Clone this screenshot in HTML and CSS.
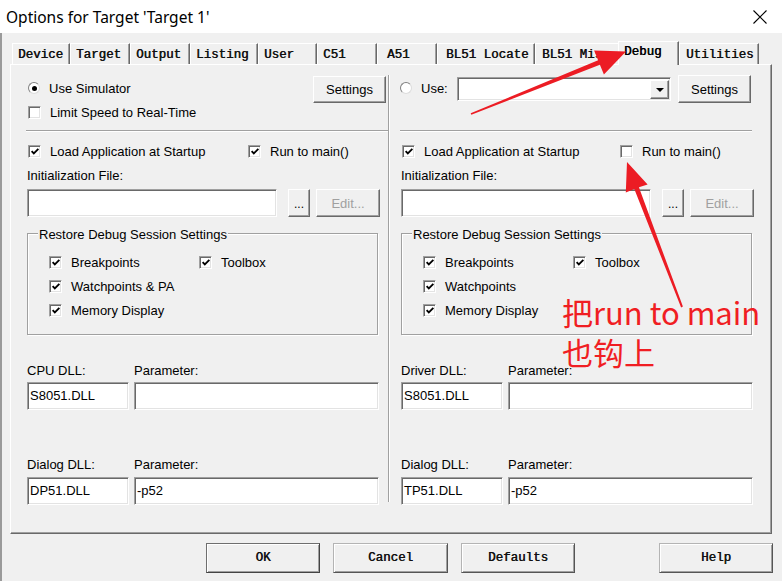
FILE: index.html
```html
<!DOCTYPE html>
<html>
<head>
<meta charset="utf-8">
<title>Options for Target 'Target 1'</title>
<link rel="stylesheet" href="styles.css">
</head>
<body>
<div class="window">
  <div class="titlebar">
    <span class="title">Options for Target 'Target 1'</span>
    <svg class="close" width="14" height="14" viewBox="0 0 14 14"><path d="M0.5 0.5 L13.5 13.5 M13.5 0.5 L0.5 13.5" stroke="#000" stroke-width="1.1" fill="none"/></svg>
  </div>
  <div class="client">
    <div class="tabs">
      <div class="tab t-device">Device</div>
      <div class="tab t-target">Target</div>
      <div class="tab t-output">Output</div>
      <div class="tab t-listing">Listing</div>
      <div class="tab t-user">User</div>
      <div class="tab t-c51">C51</div>
      <div class="tab t-a51">A51</div>
      <div class="tab t-locate">BL51 Locate</div>
      <div class="tab t-misc">BL51 Misc</div>
      <div class="tab tab-sel t-debug">Debug</div>
      <div class="tab t-util">Utilities</div>
    </div>
    <div class="panel">
      <div class="col col-left">
        <div class="top">
          <div class="stack">
            <div class="opt"><span class="rb"><span class="dot"></span></span><span>Use Simulator</span></div>
            <div class="opt"><span class="cb"></span><span>Limit Speed to Real-Time</span></div>
          </div>
          <div class="btn btn-settings">Settings</div>
        </div>
        <div class="hr"></div>
        <div class="opt-row">
          <div class="opt opt-first"><span class="cb"><svg width="11" height="11" viewBox="0 0 11 11"><path d="M1.8 5 L4.2 7.6 L9.2 2.6" fill="none" stroke="#000" stroke-width="2"/></svg></span><span>Load Application at Startup</span></div>
          <div class="opt"><span class="cb"><svg width="11" height="11" viewBox="0 0 11 11"><path d="M1.8 5 L4.2 7.6 L9.2 2.6" fill="none" stroke="#000" stroke-width="2"/></svg></span><span>Run to main()</span></div>
        </div>
        <div class="lbl">Initialization File:</div>
        <div class="init-row">
          <div class="field f-init"></div>
          <div class="btn btn-dots">...</div>
          <div class="btn btn-edit">Edit...</div>
        </div>
        <div class="group">
          <div class="legend">Restore Debug Session Settings</div>
          <div class="checks">
            <div class="opt"><span class="cb"><svg width="11" height="11" viewBox="0 0 11 11"><path d="M1.8 5 L4.2 7.6 L9.2 2.6" fill="none" stroke="#000" stroke-width="2"/></svg></span><span>Breakpoints</span></div>
            <div class="opt"><span class="cb"><svg width="11" height="11" viewBox="0 0 11 11"><path d="M1.8 5 L4.2 7.6 L9.2 2.6" fill="none" stroke="#000" stroke-width="2"/></svg></span><span>Toolbox</span></div>
            <div class="opt"><span class="cb"><svg width="11" height="11" viewBox="0 0 11 11"><path d="M1.8 5 L4.2 7.6 L9.2 2.6" fill="none" stroke="#000" stroke-width="2"/></svg></span><span>Watchpoints &amp; PA</span></div>
            <div class="opt"></div>
            <div class="opt"><span class="cb"><svg width="11" height="11" viewBox="0 0 11 11"><path d="M1.8 5 L4.2 7.6 L9.2 2.6" fill="none" stroke="#000" stroke-width="2"/></svg></span><span>Memory Display</span></div>
          </div>
        </div>
        <div class="dll-lbl dll-first"><span class="w-dll">CPU DLL:</span><span>Parameter:</span></div>
        <div class="dll-row"><div class="field f-dll">S8051.DLL</div><div class="field f-param"></div></div>
        <div class="dll-lbl dll-second"><span class="w-dll">Dialog DLL:</span><span>Parameter:</span></div>
        <div class="dll-row"><div class="field f-dll">DP51.DLL</div><div class="field f-param">-p52</div></div>
      </div>
      <div class="vdiv"></div>
      <div class="col col-right">
        <div class="top top-right">
          <div class="opt opt-use"><span class="rb"></span><span>Use:</span></div>
          <div class="combo"><span class="drop"><svg width="8" height="4" viewBox="0 0 8 4"><path d="M0 0 H8 L4 4 Z" fill="#000"/></svg></span></div>
          <div class="btn btn-settings2">Settings</div>
        </div>
        <div class="hr"></div>
        <div class="opt-row">
          <div class="opt opt-first2"><span class="cb"><svg width="11" height="11" viewBox="0 0 11 11"><path d="M1.8 5 L4.2 7.6 L9.2 2.6" fill="none" stroke="#000" stroke-width="2"/></svg></span><span>Load Application at Startup</span></div>
          <div class="opt"><span class="cb"></span><span>Run to main()</span></div>
        </div>
        <div class="lbl">Initialization File:</div>
        <div class="init-row">
          <div class="field f-init"></div>
          <div class="btn btn-dots">...</div>
          <div class="btn btn-edit">Edit...</div>
        </div>
        <div class="group">
          <div class="legend">Restore Debug Session Settings</div>
          <div class="checks">
            <div class="opt"><span class="cb"><svg width="11" height="11" viewBox="0 0 11 11"><path d="M1.8 5 L4.2 7.6 L9.2 2.6" fill="none" stroke="#000" stroke-width="2"/></svg></span><span>Breakpoints</span></div>
            <div class="opt"><span class="cb"><svg width="11" height="11" viewBox="0 0 11 11"><path d="M1.8 5 L4.2 7.6 L9.2 2.6" fill="none" stroke="#000" stroke-width="2"/></svg></span><span>Toolbox</span></div>
            <div class="opt"><span class="cb"><svg width="11" height="11" viewBox="0 0 11 11"><path d="M1.8 5 L4.2 7.6 L9.2 2.6" fill="none" stroke="#000" stroke-width="2"/></svg></span><span>Watchpoints</span></div>
            <div class="opt"></div>
            <div class="opt"><span class="cb"><svg width="11" height="11" viewBox="0 0 11 11"><path d="M1.8 5 L4.2 7.6 L9.2 2.6" fill="none" stroke="#000" stroke-width="2"/></svg></span><span>Memory Display</span></div>
          </div>
        </div>
        <div class="dll-lbl dll-first"><span class="w-dll">Driver DLL:</span><span>Parameter:</span></div>
        <div class="dll-row"><div class="field f-dll">S8051.DLL</div><div class="field f-param"></div></div>
        <div class="dll-lbl dll-second"><span class="w-dll">Dialog DLL:</span><span>Parameter:</span></div>
        <div class="dll-row"><div class="field f-dll">TP51.DLL</div><div class="field f-param">-p52</div></div>
      </div>
    </div>
    <div class="buttons">
      <div class="btn dbtn btn-ok">OK</div>
      <div class="btn dbtn btn-cancel">Cancel</div>
      <div class="btn dbtn">Defaults</div>
      <div class="btn dbtn btn-help">Help</div>
    </div>
  </div>
  <svg class="arrows" width="782" height="581" viewBox="0 0 782 581">
    <polygon fill="#ec1c24" points="470.7,113.3 598.1,60.2 594.1,50.4 626,51.5 603.9,74.6 599.9,64.8 471.3,114.7"/>
    <polygon fill="#ec1c24" points="681.1,307.4 634.3,189.1 625.8,192.5 627,162 647.6,184.6 638.9,187.3 682.9,306.6"/>
  </svg>
  <div class="note"><div class="note-line">把run to main</div><div class="note-line">也钩上</div></div>
</div>
</body>
</html>
```
FILE: styles.css
```css
* { box-sizing: border-box; }
html, body { margin: 0; padding: 0; }
body {
  width: 782px; height: 581px; overflow: hidden;
  background: #f0f0f0;
  font-family: "Liberation Sans", Arial, sans-serif;
  font-size: 13px; color: #000;
}
.window { position: relative; width: 782px; height: 581px; background: #f0f0f0; }

.titlebar {
  height: 33px; background: #fff;
  display: flex; align-items: center; justify-content: space-between;
  padding: 0 15px 0 6px;
}
.title { font-family: "Noto Sans", sans-serif; font-size: 15.5px; color: #000; }
.close { display: block; }

.client { height: 548px; padding-top: 10px; box-shadow: inset 2px 0 0 #9a9a9a; }

/* tabs */
.tabs { display: flex; align-items: flex-start; height: 21px; margin-left: 12px; position: relative; z-index: 2; }
.tab {
  height: 21px; flex: none;
  border-top: 1px solid #fff; border-left: 1px solid #fff; border-right: 1px solid #696969;
  box-shadow: inset -1px 0 0 #a0a0a0;
  background: #f0f0f0;
  font-family: "Liberation Mono", "Courier New", monospace; font-size: 12.5px;
  color: #111; text-shadow: 0.45px 0 0 #111;
  line-height: 17px; padding: 3px 0 0 5px;
  white-space: nowrap; overflow: hidden;
}
.t-device { width: 58px; }
.t-target { width: 60px; }
.t-output { width: 60px; }
.t-listing { width: 68px; }
.t-user { width: 59px; }
.t-c51 { width: 60px; }
.t-a51 { width: 60px; padding-left: 9px; }
.t-locate { width: 98px; padding-left: 8px; }
.t-misc { width: 85px; padding-left: 6px; }
.t-debug { width: 61px; margin-left: -2px; }
.t-util { width: 80px; padding-left: 6px; }
.tab-sel { height: 24px; margin-top: -2px; padding-top: 2px; position: relative; z-index: 3; color: #000; text-shadow: 0.6px 0 0 #000; }

/* panel */
.panel {
  margin-left: 10px; width: 762px; height: 470px;
  border: 1px solid; border-color: #fff #696969 #696969 #fff;
  box-shadow: inset -1px -1px 0 #a0a0a0;
  display: flex;
}
.col { flex: none; }
.col-left { width: 377px; padding: 11px 0 0 16px; }
.col-right { width: 381px; padding: 11px 19px 0 11px; }
.vdiv { flex: none; width: 2px; margin: 10px 0 31px; border-left: 1px solid #a0a0a0; border-right: 1px solid #fff; }

.top { height: 54px; display: flex; justify-content: space-between; align-items: flex-start; }
.top-right { justify-content: flex-start; }
.stack { display: flex; flex-direction: column; }
.opt { height: 24px; display: flex; align-items: center; white-space: nowrap; }
.opt .cb, .opt .rb { margin-left: 1px; margin-right: 9px; }
.cb {
  flex: none; width: 13px; height: 13px; background: #fff;
  border: 1px solid; border-color: #a0a0a0 #fff #fff #a0a0a0;
  box-shadow: inset 1px 1px 0 #696969, inset -1px -1px 0 #e3e3e3;
  display: flex; align-items: center; justify-content: center;
  padding: 1px 0 0 1px;
}
.cb svg { display: block; }
.rb {
  flex: none; width: 12px; height: 12px; border-radius: 50%; background: #fff;
  border: 1px solid; border-color: #808080 #dcdcdc #dcdcdc #808080;
  display: flex; align-items: center; justify-content: center;
}
.dot { width: 5px; height: 5px; border-radius: 50%; background: #000; }

.btn {
  flex: none; display: flex; align-items: center; justify-content: center;
  background: #f0f0f0;
  border: 1px solid; border-color: #fff #696969 #696969 #fff;
  box-shadow: inset -1px -1px 0 #a0a0a0;
  white-space: nowrap;
}
.btn-settings { width: 73px; height: 27px; margin-right: 2px; }
.btn-settings2 { width: 73px; height: 28px; margin-left: 7px; margin-top: -1px; }
.btn-dots { width: 22px; height: 28px; margin-left: 11px; align-items: flex-end; padding-bottom: 5px; font-size: 12px; }
.btn-edit { width: 64px; height: 28px; margin-left: 6px; color: #a0a0a0; }

.hr { height: 2px; border-top: 1px solid #a0a0a0; border-bottom: 1px solid #fff; margin-left: -1px; }
.opt-row { display: flex; margin-top: 7px; }
.opt-first { width: 220px; }
.opt-first2 { width: 218px; }
.lbl { height: 16px; line-height: 16px; margin-top: 5px; }
.init-row { display: flex; margin-top: 5px; height: 28px; }

.field {
  flex: none; height: 28px; background: #fff;
  border: 1px solid; border-color: #a0a0a0 #fff #fff #a0a0a0;
  box-shadow: inset 1px 1px 0 #696969, inset -1px -1px 0 #e3e3e3;
  padding-left: 2px; line-height: 24px; padding-top: 1px;
  white-space: nowrap;
}
.f-init { width: 250px; }
.f-dll { width: 102px; }
.f-param { width: 245px; margin-left: 5px; }

.group {
  width: 351px; height: 102px; margin-top: 16px;
  border: 1px solid #a0a0a0;
  box-shadow: inset 1px 1px 0 #fff, 1px 1px 0 #fff;
  display: flex; flex-direction: column; align-items: flex-start;
}
.legend { margin-top: -7px; margin-left: 10px; padding: 0 1px; height: 16px; line-height: 16px; background: #f0f0f0; }
.checks { margin-top: 7px; padding-left: 20px; display: grid; grid-template-columns: 150px auto; }

.dll-lbl { display: flex; height: 16px; line-height: 16px; }
.dll-first { margin-top: 28px; }
.dll-second { margin-top: 47px; }
.w-dll { width: 107px; flex: none; }
.dll-row { display: flex; margin-top: 3px; height: 28px; }
.dll-second + .dll-row { margin-top: 4px; }

.opt-use { width: 58px; margin-left: -2px; }
.combo {
  flex: none; width: 214px; height: 24px; margin-top: 1px; background: #fff;
  border: 1px solid; border-color: #a0a0a0 #fff #fff #a0a0a0;
  box-shadow: inset 1px 1px 0 #696969, inset -1px -1px 0 #e3e3e3;
  display: flex; justify-content: flex-end; padding: 2px 1px 1px 2px;
}
.drop {
  width: 19px; height: 100%; background: #f0f0f0;
  border: 1px solid; border-color: #fff #696969 #696969 #fff;
  box-shadow: inset -1px -1px 0 #a0a0a0;
  display: flex; align-items: center; justify-content: center;
}
.drop svg { display: block; }

.buttons { display: flex; margin-top: 9px; padding-left: 206px; padding-right: 9px; height: 30px; }
.dbtn {
  width: 114px; height: 30px; margin-right: 13px;
  font-family: "Liberation Mono", "Courier New", monospace; font-size: 12.5px;
  color: #111; text-shadow: 0.45px 0 0 #111;
  border-color: #b4b4b4 #555 #555 #b4b4b4;
  box-shadow: inset 1px 1px 0 #fff, inset -1px -1px 0 #a0a0a0;
}
.btn-ok { border-color: #6e6e6e #444 #444 #6e6e6e; }
.btn-cancel { width: 115px; }
.btn-help { margin-left: auto; margin-right: 0; }

/* annotations */
.arrows { position: absolute; left: 0; top: 0; pointer-events: none; z-index: 5; }
.note {
  position: absolute; left: 562px; top: 292px; z-index: 5;
  font-family: "Noto Sans CJK SC", "Noto Sans", sans-serif; font-size: 31px; line-height: 40px;
  color: #f01e23; white-space: nowrap;
}
.note-line { height: 40px; }
```
